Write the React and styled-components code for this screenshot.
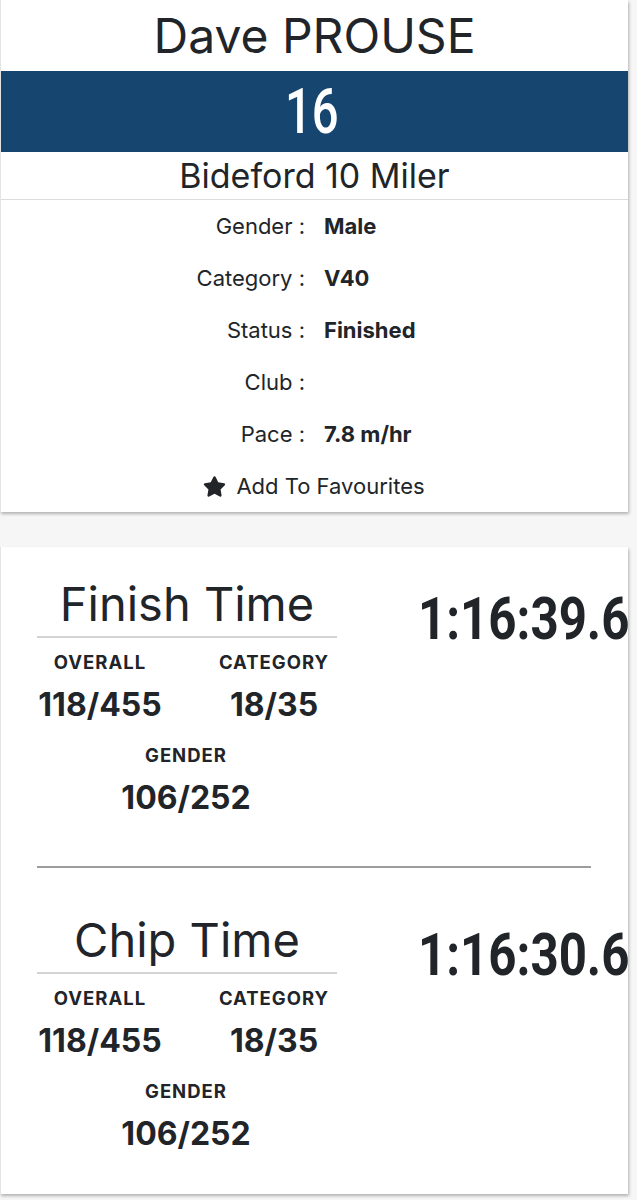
import React from 'react';
import styled, { createGlobalStyle } from 'styled-components';
import { FaStar } from 'react-icons/fa';

const GlobalStyle = createGlobalStyle`
    body {
        margin: 0;
        background: #f6f6f6;
        font-family: 'Inter', 'Noto Sans', sans-serif;
        color: #212529;
    }
`;

const Page = styled.div`
    display: flex;
    flex-direction: column;
    gap: 35px;
    width: 628px;
    padding-bottom: 7px;
`;

const Card = styled.div`
    background: #ffffff;
    border-left: 1px solid #e4e4e4;
    box-shadow: 1px 2px 3px rgba(0,0,0,0.28);
    overflow: hidden;
`;

const RunnerName = styled.h1`
    margin: 0;
    height: 71px;
    font-size: 48px;
    font-weight: 400;
    line-height: 71px;
    text-align: center;
`;

const BibBar = styled.div`
    height: 81px;
    background: #164670;
    display: flex;
    justify-content: center;
    align-items: center;
`;

const Condensed = styled.span`
    display: inline-block;
    font-family: 'Roboto', sans-serif;
    font-weight: 500;
    line-height: 1;
    transform: scaleX(${p => p.squeeze});
    transform-origin: ${p => p.origin};
`;

const BibNumber = styled(Condensed)`
    color: #ffffff;
    font-size: 63px;
    margin-right: 6px;
`;

const EventName = styled.h2`
    margin: 0;
    height: 47px;
    line-height: 47px;
    font-size: 34px;
    font-weight: 400;
    text-align: center;
    border-bottom: 1px solid #dcdcdc;
`;

const DetailRow = styled.div`
    display: grid;
    grid-template-columns: 1fr 1fr;
    column-gap: 19px;
    height: 52px;
    align-items: center;
    font-size: 22px;
`;

const DetailLabel = styled.span`
    text-align: right;
`;

const DetailValue = styled.span`
    font-weight: 700;
`;

const FavouriteRow = styled.div`
    display: flex;
    justify-content: center;
    align-items: center;
    gap: 10px;
    height: 52px;
    font-size: 22px;
    padding-right: 1px;
`;

const TimeSection = styled.div`
    display: flex;
    padding: ${p => p.first ? '29px' : '44px'} 0 0 36px;
`;

const TimeBlock = styled.div`
    flex-shrink: 0;
    width: 300px;
    display: flex;
    flex-direction: column;
    align-items: center;
`;

const TimeTitle = styled.div`
    align-self: stretch;
    text-align: center;
    font-size: 47px;
    line-height: 56px;
    padding-bottom: 4px;
    border-bottom: 2px solid #d4d4d4;
`;

const RankGrid = styled.div`
    display: grid;
    grid-template-columns: 126px 118px;
    column-gap: 52px;
    row-gap: 21px;
    margin-top: 13px;
    align-self: stretch;
`;

const RankCell = styled.div`
    display: flex;
    flex-direction: column;
    align-items: center;
    gap: 14px;
    grid-column: ${p => p.wide ? '1 / span 2' : 'auto'};
    ${p => p.wide && 'margin-left: 2px;'}
`;

const RankLabel = styled.span`
    font-size: 18.5px;
    line-height: 22px;
    font-weight: 700;
    letter-spacing: 1px;
`;

const RankValue = styled.span`
    font-size: 32px;
    line-height: 36px;
    font-weight: 700;
`;

const ClockTime = styled(Condensed)`
    font-size: 60px;
    font-weight: 700;
    margin: 13px 0 0 81px;
    white-space: nowrap;
`;

const Separator = styled.hr`
    margin: 50px 37px 0 36px;
    border: none;
    border-top: 2px solid #9d9d9d;
`;

const BottomSpace = styled.div`
    height: 42px;
`;

const details = [
    ['Gender', 'Male'],
    ['Category', 'V40'],
    ['Status', 'Finished'],
    ['Club', ''],
    ['Pace', '7.8 m/hr'],
];

const ranks = { overall: '118/455', category: '18/35', gender: '106/252' };

const Section = ({ title, time, first }) => (
    <TimeSection first={first}>
        <TimeBlock>
            <TimeTitle>{title}</TimeTitle>
            <RankGrid>
                <RankCell>
                    <RankLabel>OVERALL</RankLabel>
                    <RankValue>{ranks.overall}</RankValue>
                </RankCell>
                <RankCell>
                    <RankLabel>CATEGORY</RankLabel>
                    <RankValue>{ranks.category}</RankValue>
                </RankCell>
                <RankCell wide>
                    <RankLabel>GENDER</RankLabel>
                    <RankValue>{ranks.gender}</RankValue>
                </RankCell>
            </RankGrid>
        </TimeBlock>
        <div>
            <ClockTime squeeze={0.82} origin="left top">{time}</ClockTime>
        </div>
    </TimeSection>
);

const App = () => (
    <Page>
        <GlobalStyle />
        <Card>
            <RunnerName>Dave PROUSE</RunnerName>
            <BibBar>
                <BibNumber squeeze={0.75} origin="center">16</BibNumber>
            </BibBar>
            <EventName>Bideford 10 Miler</EventName>
            {details.map(([label, value]) => (
                <DetailRow key={label}>
                    <DetailLabel>{label} :</DetailLabel>
                    <DetailValue>{value}</DetailValue>
                </DetailRow>
            ))}
            <FavouriteRow>
                <FaStar size={23} />
                <span>Add To Favourites</span>
            </FavouriteRow>
        </Card>
        <Card>
            <Section first title="Finish Time" time="1:16:39.6" />
            <Separator />
            <Section title="Chip Time" time="1:16:30.6" />
            <BottomSpace />
        </Card>
    </Page>
);

export default App;
